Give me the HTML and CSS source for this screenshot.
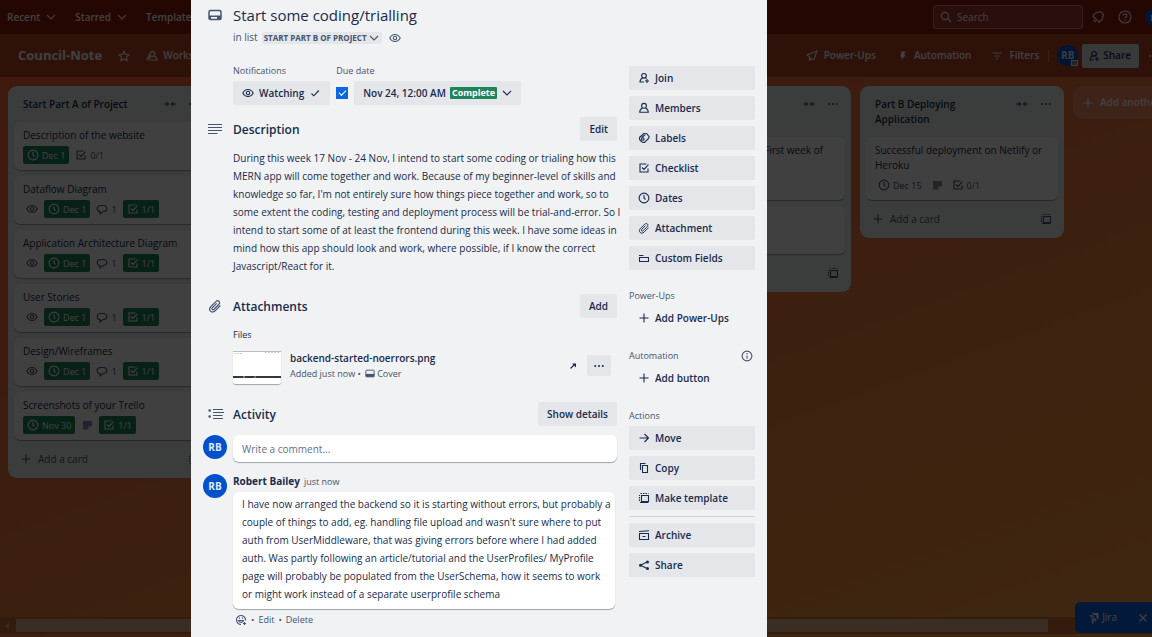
FILE: index.html
```html
<!DOCTYPE html>
<html lang="en">
<head>
<meta charset="utf-8">
<meta name="viewport" content="width=device-width, initial-scale=1">
<title>Council-Note</title>
<link rel="stylesheet" href="styles.css">
</head>
<body>
<svg class="sprite" aria-hidden="true">
  <symbol id="chevron" viewBox="0 0 12 12"><path d="M2 4l4 4 4-4"/></symbol>
  <symbol id="eye" viewBox="0 0 12 12"><path d="M.8 6C2 3.700 3.800 2.500 6 2.500S10 3.700 11.200 6C10 8.300 8.200 9.500 6 9.500S2 8.300.8 6z"/><circle cx="6" cy="6" r="1.700"/></symbol>
  <symbol id="clock" viewBox="0 0 12 12"><circle cx="6" cy="6" r="4.900"/><path d="M6 3v3l1.500 1.500"/></symbol>
  <symbol id="check" viewBox="0 0 12 12"><path d="M2.500 6.500l2.300 2.300L9.800 3.500"/></symbol>
  <symbol id="checkbox" viewBox="0 0 12 12"><path d="M8.500 2H2v8h8V6.500M4 5.500l2 2 4.500-4.800"/></symbol>
  <symbol id="bubble" viewBox="0 0 12 12"><path d="M4 8.500C2.200 8.300 1.200 7.200 1.200 5.500 1.200 3.500 2.500 2.500 5 2.500h2c2.500 0 3.800 1 3.800 3S9.500 8.500 7 8.500L4 10.800z"/></symbol>
  <symbol id="note" viewBox="0 0 12 12"><path class="solid" d="M2 2h9v5.500H7.500V10.500H2z"/></symbol>
  <symbol id="plus" viewBox="0 0 12 12"><path d="M6 1.500v9M1.500 6h9"/></symbol>
  <symbol id="collapse" viewBox="0 0 14 12"><path d="M1 6h4M9 6h4"/><path class="solid" d="M3.500 3.500L6.500 6l-3 2.500zM10.500 3.500L7.500 6l3 2.500z"/></symbol>
  <symbol id="dots" viewBox="0 0 12 12"><circle class="solid" cx="2.200" cy="6" r="1"/><circle class="solid" cx="6" cy="6" r="1"/><circle class="solid" cx="9.800" cy="6" r="1"/></symbol>
  <symbol id="template" viewBox="0 0 12 12"><path d="M1.500 9V3M2.500 1.500h8" stroke-dasharray="1.500 1"/><path d="M3.500 3.500h7v6h-7zM2 10.500h8.500"/></symbol>
  <symbol id="star" viewBox="0 0 12 12"><path d="M6 1.200l1.500 3.200 3.400.4-2.500 2.400.6 3.500L6 9 3 10.700l.6-3.500L1.100 4.800l3.400-.4z"/></symbol>
  <symbol id="people" viewBox="0 0 12 12"><circle cx="6.500" cy="4" r="2.400"/><path d="M5 6.500C3.500 7 3 8 3 10h8c0-2-.5-3-2.500-3.500M3.500 4C2.500 5 3 6 3.500 6.500 1.800 7 1 8 1 9.500h1"/></symbol>
  <symbol id="rocket" viewBox="0 0 12 12"><path d="M11 1L1.200 5l2.300 2.200v3l2.300-1 2.200.3zM3.500 7.200l2.300 2"/></symbol>
  <symbol id="bell" viewBox="0 0 14 14"><path d="M9.500 1.500l3 3-1.200 4.700-3.300 3L1.800 6l3-3.300zM3.500 9.500c-1 1-.3 2.500 1.500 1.500"/></symbol>
  <symbol id="bolt" viewBox="0 0 12 12"><path class="solid" d="M5.500 1.500h3.800L8 5h1.700L5 10.500l1-3.700H4z"/></symbol>
  <symbol id="filter" viewBox="0 0 12 12"><path d="M1.500 3h9M3.500 6h5M5 9h2"/></symbol>
  <symbol id="search" viewBox="0 0 12 12"><circle cx="5" cy="5" r="3.600"/><path d="M7.700 7.700l3.300 3.300"/></symbol>
  <symbol id="help" viewBox="0 0 14 14"><circle cx="7" cy="7" r="6"/><path d="M5 5.800C5 3.300 9 3.300 9 5.600 9 7 7 7 7 8.500M7 9.800v1.200"/></symbol>
  <symbol id="join" viewBox="0 0 12 12"><circle cx="6" cy="3.800" r="2.300"/><path d="M4.800 5.800C2.800 6.800 2 8 2 10h4M9 7v4M7 9h4M7.500 5.800l1 .7"/></symbol>
  <symbol id="member" viewBox="0 0 12 12"><circle cx="6" cy="3.800" r="2.400"/><path d="M4.500 6C2.700 6.800 1.700 8.200 1.700 10.300h8.600C10.300 8.200 9.300 6.800 7.500 6"/></symbol>
  <symbol id="label" viewBox="0 0 12 12"><path d="M1.500 5.500L5.800 1.500l3 .2 2.300 3-.3 1.500L6.500 10.500C4 11 1 8 1.500 5.500z"/><circle cx="4.800" cy="7" r="1.300"/><path d="M3.500 5.500L7 3"/></symbol>
  <symbol id="clip" viewBox="0 0 14 14"><path d="M12.300 6.500l-5.200 5.300c-3.500 3.200-7.400-.8-4.300-4.200l5-5c2.400-2.200 5.100.6 2.900 2.900L6 10.200c-1.300 1.200-2.800-.3-1.600-1.600l4.300-4.300"/></symbol>
  <symbol id="fields" viewBox="0 0 12 12"><path d="M1 3.500h4.500M1.500 5.500h9v4h-9z"/></symbol>
  <symbol id="info" viewBox="0 0 12 12"><circle cx="6" cy="6" r="4.900"/><path d="M6 5.500v3.200M6 3v1.200"/></symbol>
  <symbol id="arrow" viewBox="0 0 12 12"><path d="M1.500 6h9M6.500 2l4 4-4 4"/></symbol>
  <symbol id="copy" viewBox="0 0 12 12"><path d="M2.500 8V1.500h5M4.500 3.500h5v7h-5z"/></symbol>
  <symbol id="archive" viewBox="0 0 12 12"><path d="M1 2.500l10-.7M1 4.500h10M1.500 5v5.500h9V5M4.500 7.500h3"/></symbol>
  <symbol id="share" viewBox="0 0 12 12"><circle class="solid" cx="2.500" cy="6.300" r="1.500"/><circle class="solid" cx="9.500" cy="3" r="1.500"/><circle class="solid" cx="9.500" cy="9.500" r="1.500"/><path d="M9 3L2.500 6.300 9 9.500"/></symbol>
  <symbol id="card" viewBox="0 0 14 12"><rect x="1" y="1.500" width="12" height="9" rx="1.500" stroke-width="1.500"/><path class="solid" d="M1 6.500h12v1.500H1zM9 8h4v2H9zM1 8h2v2H1z"/></symbol>
  <symbol id="lines" viewBox="0 0 14 12"><path d="M0 1.500h14M0 4.500h14M0 7.500h14M0 10.500h9.500"/></symbol>
  <symbol id="list" viewBox="0 0 16 12"><path d="M5 1.500h10M5 4.500h11M5 7.500h9.500M5 10.500h10"/><circle class="solid" cx="1.700" cy="2.500" r="1.300"/><circle class="solid" cx="1.700" cy="8.500" r="1.300"/></symbol>
  <symbol id="cover" viewBox="0 0 12 10"><rect x="1" y="1" width="10" height="8" rx="1"/><path class="solid" d="M1 5.500h10V9H1z"/></symbol>
  <symbol id="external" viewBox="0 0 8 8"><path d="M1.500 6.500L5.500 2.500"/><path class="solid" d="M3 1.500h4v4z"/></symbol>
  <symbol id="smile" viewBox="0 0 12 12"><path d="M10.500 6.500a4.500 4.500 0 1 0-4.500 4M3.500 6.500h5c-.5 2.500-4.500 2.500-5 0zM4.500 3.500v1.200M7.500 3.500v1.200M9.500 8v3M8 9.500h3"/></symbol>
  <symbol id="jira" viewBox="0 0 12 12"><path class="solid" d="M5 1h6.500v6.500C9.800 7 9.300 6 9.300 3.200 6.800 3.200 5.500 2.800 5 1z"/><path class="solid" d="M2.600 3.200C3 4.800 4.300 5.400 7 5.400c0 2.600.6 3.900 2.200 4.300V7.500L5.500 3.200zM.2 5.500h4.500v4.800l.5 1.700C6.500 11.500 6.900 10.300 6.800 7.500L4.700 5.500z"/></symbol>
  <symbol id="close" viewBox="0 0 12 12"><path d="M2.500 2.500l7 7M9.500 2.500l-7 7"/></symbol>
</svg>

<div class="app">
  <header class="topbar">
    <nav class="topnav">
      <button class="nav-btn">Recent <svg class="ic"><use href="#chevron"/></svg></button>
      <button class="nav-btn">Starred <svg class="ic"><use href="#chevron"/></svg></button>
      <button class="nav-btn">Templates</button>
    </nav>
    <div class="toptools">
      <label class="search"><svg class="ic"><use href="#search"/></svg><input type="search" placeholder="Search" aria-label="Search"></label>
      <button class="icon-btn" aria-label="Notifications"><svg class="ic ic-l"><use href="#bell"/></svg></button>
      <button class="icon-btn" aria-label="Help"><svg class="ic ic-l"><use href="#help"/></svg></button>
      <span class="avatar avatar-s">RB</span>
    </div>
  </header>

  <div class="boardbar">
    <div class="board-left">
      <h1 class="board-name">Council-Note</h1>
      <button class="icon-btn" aria-label="Star board"><svg class="ic"><use href="#star"/></svg></button>
      <button class="nav-btn"><svg class="ic"><use href="#people"/></svg> Workspace</button>
    </div>
    <div class="board-right">
      <button class="nav-btn"><svg class="ic"><use href="#rocket"/></svg> Power-Ups</button>
      <button class="nav-btn"><svg class="ic"><use href="#bolt"/></svg> Automation</button>
      <button class="nav-btn"><svg class="ic"><use href="#filter"/></svg> Filters</button>
      <span class="divider"></span>
      <span class="avatar avatar-m">RB<i class="rank"></i></span>
      <button class="share-btn"><svg class="ic"><use href="#join"/></svg> Share</button>
      <button class="icon-btn" aria-label="Board menu"><svg class="ic"><use href="#dots"/></svg></button>
    </div>
  </div>

  <main class="board">
    <section class="list">
      <header class="list-head"><h2>Start Part A of Project</h2><svg class="ic ic-w"><use href="#collapse"/></svg><svg class="ic"><use href="#dots"/></svg></header>
      <article class="card"><h3>Description of the website</h3><div class="badges"><span class="badge done"><svg class="ic"><use href="#clock"/></svg>Dec 1</span><span class="badge"><svg class="ic"><use href="#checkbox"/></svg>0/1</span></div></article>
      <article class="card"><h3>Dataflow Diagram</h3><div class="badges"><span class="badge"><svg class="ic"><use href="#eye"/></svg></span><span class="badge done"><svg class="ic"><use href="#clock"/></svg>Dec 1</span><span class="badge"><svg class="ic"><use href="#bubble"/></svg>1</span><span class="badge done"><svg class="ic"><use href="#checkbox"/></svg>1/1</span></div></article>
      <article class="card"><h3>Application Architecture Diagram</h3><div class="badges"><span class="badge"><svg class="ic"><use href="#eye"/></svg></span><span class="badge done"><svg class="ic"><use href="#clock"/></svg>Dec 1</span><span class="badge"><svg class="ic"><use href="#bubble"/></svg>1</span><span class="badge done"><svg class="ic"><use href="#checkbox"/></svg>1/1</span></div></article>
      <article class="card"><h3>User Stories</h3><div class="badges"><span class="badge"><svg class="ic"><use href="#eye"/></svg></span><span class="badge done"><svg class="ic"><use href="#clock"/></svg>Dec 1</span><span class="badge"><svg class="ic"><use href="#bubble"/></svg>1</span><span class="badge done"><svg class="ic"><use href="#checkbox"/></svg>1/1</span></div></article>
      <article class="card"><h3>Design/Wireframes</h3><div class="badges"><span class="badge"><svg class="ic"><use href="#eye"/></svg></span><span class="badge done"><svg class="ic"><use href="#clock"/></svg>Dec 1</span><span class="badge"><svg class="ic"><use href="#bubble"/></svg>1</span><span class="badge done"><svg class="ic"><use href="#checkbox"/></svg>1/1</span></div></article>
      <article class="card"><h3>Screenshots of your Trello</h3><div class="badges"><span class="badge done"><svg class="ic"><use href="#clock"/></svg>Nov 30</span><span class="badge pale"><svg class="ic"><use href="#note"/></svg></span><span class="badge done"><svg class="ic"><use href="#checkbox"/></svg>1/1</span></div></article>
      <footer class="list-foot"><button class="add-card"><svg class="ic"><use href="#plus"/></svg>Add a card</button><svg class="ic"><use href="#template"/></svg></footer>
    </section>
    <section class="list"></section>
    <section class="list"></section>
    <section class="list">
      <header class="list-head two-line"><h2></h2><svg class="ic ic-w"><use href="#collapse"/></svg><svg class="ic"><use href="#dots"/></svg></header>
      <article class="card card-tall"><h3 class="line-end">First week of</h3></article>
      <article class="card card-short"></article>
      <footer class="list-foot"><span class="spacer"></span><svg class="ic"><use href="#template"/></svg></footer>
    </section>
    <section class="list">
      <header class="list-head two-line"><h2>Part B Deploying Application</h2><svg class="ic ic-w"><use href="#collapse"/></svg><svg class="ic"><use href="#dots"/></svg></header>
      <article class="card card-tall"><h3>Successful deployment on Netlify or Heroku</h3><div class="badges"><span class="badge"><svg class="ic"><use href="#clock"/></svg>Dec 15</span><span class="badge pale"><svg class="ic"><use href="#note"/></svg></span><span class="badge"><svg class="ic"><use href="#checkbox"/></svg>0/1</span></div></article>
      <footer class="list-foot"><button class="add-card"><svg class="ic"><use href="#plus"/></svg>Add a card</button><svg class="ic"><use href="#template"/></svg></footer>
    </section>
    <button class="add-list"><svg class="ic"><use href="#plus"/></svg>Add another list</button>
  </main>

  <div class="scrollbar"><span class="scroll-arrow"></span><span class="scroll-thumb"></span></div>
  <div class="jira"><svg class="ic"><use href="#jira"/></svg><span>Jira</span><button class="icon-btn" aria-label="Dismiss"><svg class="ic"><use href="#close"/></svg></button></div>
</div>

<div class="overlay">
  <div class="dialog" role="dialog" aria-labelledby="card-title">
    <div class="detail">
      <div class="row title-row">
        <svg class="ic ic-h"><use href="#card"/></svg>
        <h2 id="card-title">Start some coding/trialling</h2>
      </div>
      <div class="in-list">in list <button class="list-btn">START PART B OF PROJECT<svg class="ic"><use href="#chevron"/></svg></button><svg class="ic"><use href="#eye"/></svg></div>

      <div class="facts">
        <div class="fact"><h3 class="small-head">Notifications</h3><button class="btn"><svg class="ic"><use href="#eye"/></svg>Watching<svg class="ic"><use href="#check"/></svg></button></div>
        <div class="fact"><h3 class="small-head">Due date</h3><div class="due"><input type="checkbox" class="tick" checked aria-label="Due date complete"><button class="btn">Nov 24, 12:00 AM<span class="complete">Complete</span><svg class="ic"><use href="#chevron"/></svg></button></div></div>
      </div>

      <div class="row section-row"><svg class="ic ic-h"><use href="#lines"/></svg><h3>Description</h3><button class="btn">Edit</button></div>
      <p class="prose">During this week 17 Nov - 24 Nov, I intend to start some coding or trialing how this<br>MERN app will come together and work. Because of my beginner-level of skills and<br>knowledge so far, I'm not entirely sure how things piece together and work, so to<br>some extent the coding, testing and deployment process will be trial-and-error. So I<br>intend to start some of at least the frontend during this week. I have some ideas in<br>mind how this app should look and work, where possible, if I know the correct<br>Javascript/React for it.</p>

      <div class="row section-row attachments"><svg class="ic ic-h"><use href="#clip"/></svg><h3>Attachments</h3><button class="btn">Add</button></div>
      <h4 class="files">Files</h4>
      <div class="file">
        <svg class="thumb" viewBox="0 0 48 37" preserveAspectRatio="none"><path fill="#fff" d="M0 0h48v37H0z"/><path fill="#f4f4f4" d="M0 0h48v4H0z"/><path fill="#b9bbbb" d="M0 4h48v1H0z"/><path stroke="#d0d0d0" stroke-dasharray="2 1" d="M1 6.500h9M32 5.500h15"/><path fill="#34383b" d="M0 29h48v2H0z"/><path fill="#b66" d="M10 29h2v2h-2z"/><path fill="#577a70" d="M21 29h2v2h-2z"/></svg>
        <div class="file-text"><a class="file-name" href="#file">backend-started-noerrors.png</a><div class="file-meta">Added just now&nbsp;•&nbsp;<svg class="ic ic-c"><use href="#cover"/></svg>Cover</div></div>
        <svg class="ic ic-x"><use href="#external"/></svg>
        <button class="btn more" aria-label="More"><svg class="ic"><use href="#dots"/></svg></button>
      </div>

      <div class="row section-row"><svg class="ic ic-h ic-list"><use href="#list"/></svg><h3>Activity</h3><button class="btn">Show details</button></div>
      <div class="write"><span class="avatar">RB</span><input class="comment-input" type="text" placeholder="Write a comment..." aria-label="Write a comment"></div>
      <div class="comment">
        <span class="avatar">RB</span>
        <div class="comment-body">
          <div class="by"><strong>Robert Bailey</strong><span>just now</span></div>
          <p class="bubble">I have now arranged the backend so it is starting without errors, but probably a<br>couple of things to add, eg. handling file upload and wasn't sure where to put<br>auth from UserMiddleware, that was giving errors before where I had added<br>auth. Was partly following an article/tutorial and the UserProfiles/ MyProfile<br>page will probably be populated from the UserSchema, how it seems to work<br>or might work instead of a separate userprofile schema</p>
          <div class="comment-tools"><svg class="ic"><use href="#smile"/></svg><span>•</span><a href="#edit">Edit</a><span>•</span><a href="#delete">Delete</a></div>
        </div>
      </div>
    </div>

    <aside class="side">
      <div class="group">
        <button class="btn"><svg class="ic"><use href="#join"/></svg>Join</button>
        <button class="btn"><svg class="ic"><use href="#member"/></svg>Members</button>
        <button class="btn"><svg class="ic"><use href="#label"/></svg>Labels</button>
        <button class="btn"><svg class="ic"><use href="#checkbox"/></svg>Checklist</button>
        <button class="btn"><svg class="ic"><use href="#clock"/></svg>Dates</button>
        <button class="btn"><svg class="ic"><use href="#clip"/></svg>Attachment</button>
        <button class="btn"><svg class="ic"><use href="#fields"/></svg>Custom Fields</button>
      </div>
      <h3 class="small-head side-head">Power-Ups</h3>
      <button class="btn plain"><svg class="ic"><use href="#plus"/></svg>Add Power-Ups</button>
      <h3 class="small-head side-head">Automation<svg class="ic"><use href="#info"/></svg></h3>
      <button class="btn plain"><svg class="ic"><use href="#plus"/></svg>Add button</button>
      <h3 class="small-head side-head">Actions</h3>
      <div class="group">
        <button class="btn"><svg class="ic"><use href="#arrow"/></svg>Move</button>
        <button class="btn"><svg class="ic"><use href="#copy"/></svg>Copy</button>
        <button class="btn"><svg class="ic"><use href="#template"/></svg>Make template</button>
        <hr class="rule">
        <button class="btn"><svg class="ic"><use href="#archive"/></svg>Archive</button>
        <button class="btn"><svg class="ic"><use href="#share"/></svg>Share</button>
      </div>
    </aside>
  </div>
</div>
</body>
</html>
```
FILE: styles.css
```css
* { box-sizing: border-box; }
html, body { height: 100%; }
body {
  margin: 0;
  overflow: hidden;
  font-family: "Open Sans", "Noto Sans", sans-serif;
  font-size: 10px;
  line-height: 15px;
  color: #172b4d;
}
h1, h2, h3, h4, p { margin: 0; font-weight: 400; }
button, input { font: inherit; color: inherit; }
button { margin: 0; padding: 0; border: 0; background: none; white-space: nowrap; cursor: pointer; }
a { color: inherit; text-decoration: none; }
.sprite { position: absolute; width: 0; height: 0; }

.ic { width: 12px; height: 12px; flex: none; fill: none; stroke: currentColor; stroke-width: 1.1; }
.ic-l { width: 14px; height: 14px; }
.ic-w { width: 14px; }
.solid { fill: currentColor; stroke: none; }

/* Board behind the dialog */
.app {
  display: flex;
  flex-direction: column;
  height: 100%;
  overflow: hidden;
  background: linear-gradient(160deg, #ff5c38 0%, #f8683c 20%, #ec7a3e 50%, #fc9c40 100%);
}
.topbar { display: flex; justify-content: space-between; height: 34px; flex: none; align-items: center; padding-left: 7px; background: #901808; color: #fff; }
.topnav { display: flex; gap: 18px; }
.nav-btn { display: flex; align-items: center; gap: 5px; font-weight: 600; }
.toptools { display: flex; align-items: center; gap: 13px; margin-right: -15px; }
.search { display: flex; align-items: center; gap: 5px; width: 150px; height: 24px; margin-right: -5px; padding: 0 6px; border: 1px solid #c08080; border-radius: 3px; background: #a83830; }
.search input { min-width: 0; width: 100%; border: 0; padding: 0; background: none; outline: 0; }
.search input::placeholder { color: #fff; opacity: 1; }
.icon-btn { display: flex; align-items: center; }
.avatar { display: flex; flex: none; align-items: center; justify-content: center; width: 24px; height: 24px; border-radius: 50%; background: #0052cc; color: #deebff; font-weight: 700; }
.avatar-s { width: 22px; height: 18px; border-radius: 9px; font-size: 9px; }
.avatar-m { position: relative; width: 21px; height: 21px; }
.rank { position: absolute; right: 0; bottom: 0; width: 7px; height: 6px; border: 1px solid #fff; background: #88b; }

.boardbar { display: flex; flex: none; justify-content: space-between; align-items: center; height: 43px; padding-left: 18px; background: #b84828; color: #fff; }
.board-left, .board-right { display: flex; align-items: center; }
.board-left { gap: 16px; }
.board-name { font-size: 13px; font-weight: 700; }
.board-right { gap: 20px; margin-right: -8px; }
.board-right .nav-btn { gap: 6px; }
.board-right .divider { width: 1px; height: 12px; margin: 0 -12px 0 -11px; background: #e08870; }
.share-btn { display: flex; align-items: center; gap: 3px; height: 24px; margin-left: -16px; padding: 0 8px 0 6px; border-radius: 2px; background: #dfe6e8; color: #172b4d; font-weight: 600; }
.board-right .icon-btn { margin-left: -11px; }

.board { display: grid; grid-template-columns: repeat(6, 204px); gap: 9px; align-items: start; flex: 1; min-height: 0; padding: 9px 8px; }
.list { min-height: 90px; padding: 0 6px; border-radius: 9px; background: #e8f4f0; color: #172b4d; }
.list-head { display: flex; align-items: flex-start; gap: 11px; min-height: 36px; padding: 11px 6px 0 9px; }
.list-head h2 { flex: 1; font-size: 10px; font-weight: 600; line-height: 15px; }
.list-head .ic { margin-top: 1px; color: #44546f; }
.two-line { min-height: 51px; }
.card { margin-bottom: 6px; padding: 6px 9px 5px; min-height: 48px; border-radius: 6px; background: #fff; box-shadow: 0 1px 1px #9aa3b0; }
.card h3 { font-size: 10px; line-height: 15px; }
.card-tall { min-height: 63px; }
.line-end { padding-left: 102px; white-space: nowrap; }
.badges { display: flex; gap: 3px; margin-top: 3px; }
.badge { display: flex; align-items: center; gap: 3px; height: 18px; padding: 0 3px; color: #44546f; font-size: 9px; font-weight: 500; }
.badge.done { border-radius: 2px; padding: 0 4px; background: #1f845a; color: #fff; }
.badge.pale { color: #8590a2; }
.list-foot { display: flex; align-items: center; height: 32px; padding: 0 6px 6px; color: #44546f; }
.add-card { display: flex; flex: 1; gap: 6px; align-items: center; font-weight: 500; }
.spacer { flex: 1; }
.add-list { display: flex; align-items: center; gap: 6px; height: 33px; padding: 0 9px; border-radius: 9px; background: #f88a60; color: #fff; font-weight: 600; }

.scrollbar { display: flex; flex: none; align-items: center; gap: 7px; height: 17px; margin-bottom: 3px; padding-left: 5px; background: #cc7038; }
.scroll-arrow { border: 4px solid transparent; border-left: 0; border-right-color: #eea; opacity: .5; }
.scroll-thumb { width: 90%; height: 13px; background: #e8b890; }
.jira { position: absolute; right: 0; bottom: 4px; display: flex; align-items: center; gap: 3px; height: 31px; padding: 0 3px 0 12px; border-radius: 5px 0 0 5px; background: #0c66e4; color: #fff; font-size: 10px; }
.jira .icon-btn { margin-left: 17px; }

/* Dialog */
.overlay { position: fixed; inset: 0; display: grid; grid-template-columns: 191fr 576fr 385fr; background: rgba(0, 0, 0, .75); }
.dialog { grid-column: 2; display: grid; grid-template-columns: 1fr 126px; gap: 12px; padding: 0 12px; background: #f1f2f4; }
.detail { min-width: 0; }
.row { display: grid; grid-template-columns: 30px 1fr auto; align-items: center; }
.ic-h { width: 14px; height: 14px; margin-left: 5px; color: #44546f; stroke-width: 1.2; }
.ic-list { width: 16px; }
.title-row { padding-top: 5px; }
.title-row h2 { font-size: 15px; line-height: 20px; font-weight: 500; }
.in-list { display: flex; align-items: center; gap: 4px; margin: 5px 0 0 30px; color: #44546f; }
.list-btn { display: flex; align-items: center; gap: 1px; height: 12px; padding: 0 2px; border-radius: 2px; background: #e4e6ea; font-size: 8px; font-weight: 700; }
.in-list > .ic { margin-left: 3px; }
.facts { display: flex; gap: 6px; margin: 20px 0 0 30px; }
.small-head { font-size: 9px; line-height: 12px; font-weight: 500; color: #44546f; }
.btn { display: inline-flex; align-items: center; gap: 5px; height: 24px; padding: 0 9px; border-radius: 2px; background: #e4e6ea; font-size: 10px; font-weight: 600; }
.fact .btn { margin-top: 4px; }
.due { display: flex; align-items: center; gap: 6px; }
.due .btn { gap: 4px; padding-right: 8px; }
.tick { appearance: none; width: 12px; height: 12px; margin: 4px 0 0; background: #0c66e4; display: grid; place-items: center; }
.tick::after { content: ""; width: 6px; height: 3px; border: solid #fff; border-width: 0 0 1px 1px; transform: rotate(-45deg); margin-bottom: 2px; }
.complete { padding: 0 2px; border-radius: 1px; background: #1f845a; color: #fff; font-size: 9px; line-height: 12px; font-weight: 700; }
.section-row { margin-top: 12px; }
.section-row h3 { font-size: 12px; font-weight: 600; }
.prose { margin: 8px 0 0 30px; line-height: 18px; white-space: nowrap; }
.section-row.attachments { margin-top: 19px; }
.files { margin: 9px 0 0 30px; font-size: 9px; font-weight: 500; }
.file { display: flex; align-items: center; margin: 5px 6px 0 30px; }
.thumb { width: 48px; height: 37px; border-radius: 3px; box-shadow: 0 1px 1px #9aa3b0; }
.file-text { flex: 1; margin-left: 9px; }
.file-name { font-weight: 600; }
.file-meta { display: flex; align-items: center; color: #44546f; font-size: 9px; }
.ic-c { width: 10px; height: 9px; margin: 0 2px; }
.ic-x { width: 8px; height: 8px; margin-right: 10px; }
.more { padding: 0 6px; height: 21px; }
.file + .section-row { margin-top: 18px; }
.write { display: flex; gap: 6px; margin-top: 9px; }
.comment-input { flex: 1; min-width: 0; height: 27px; padding: 0 9px; border: 0; border-radius: 6px; background: #fff; box-shadow: 0 1px 1px #9aa3b0; }
.comment-input::placeholder { color: #626f86; opacity: 1; }
.comment { display: flex; gap: 6px; margin-top: 12px; }
.comment-body { flex: 1; min-width: 0; padding-right: 2px; }
.by { display: flex; gap: 4px; }
.by strong { font-weight: 700; }
.by span { font-size: 9px; color: #44546f; }
.bubble { margin-top: 3px; padding: 3px 9px 6px; border-radius: 6px; background: #fff; box-shadow: 0 1px 1px #9aa3b0; line-height: 18px; white-space: nowrap; }
.comment-tools { display: flex; align-items: center; gap: 4px; margin: 3px 0 0 2px; font-size: 9px; color: #44546f; }

.side { padding-top: 66px; }
.group { display: grid; gap: 6px; }
.side .btn { width: 100%; gap: 5px; }
.side .plain { background: none; }
.side-head { display: flex; justify-content: space-between; margin: 20px 2px 4px 0; }
.rule { width: 100%; height: 1px; margin: 0; border: 0; background: #d0d3d9; }
```
